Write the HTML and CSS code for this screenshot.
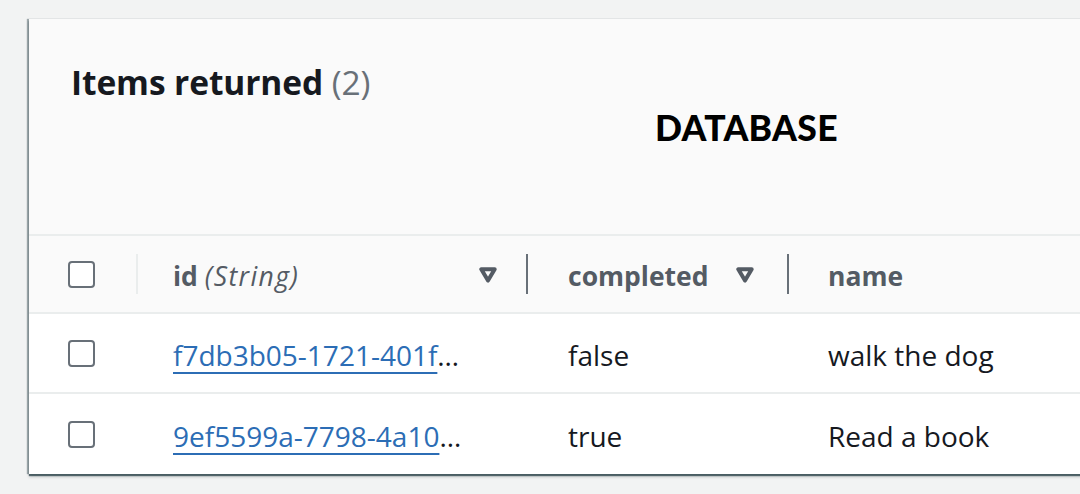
FILE: index.html
```html
<!DOCTYPE html>
<html lang="en">
<head>
<meta charset="utf-8">
<title>Items returned</title>
<link rel="stylesheet" href="styles.css">
</head>
<body>
<div class="card">
  <div class="card-header">
    <h2 class="title">Items returned <span class="count">(2)</span></h2>
    <div class="badge">DATABASE</div>
  </div>
  <div class="table">
    <div class="row head">
      <div class="cell check sep-light"><span class="box"></span></div>
      <div class="cell col-id sep-dark"><span class="label">id <em>(String)</em></span>
        <svg class="sort" width="18" height="16" viewBox="0 0 18 16"><path d="M2.3 2.3 H15.7 L9 13.6 Z" fill="none" stroke="#545b64" stroke-width="4" stroke-linejoin="round"/></svg>
      </div>
      <div class="cell col-completed sep-dark"><span class="label">completed</span>
        <svg class="sort" width="18" height="16" viewBox="0 0 18 16"><path d="M2.3 2.3 H15.7 L9 13.6 Z" fill="none" stroke="#545b64" stroke-width="4" stroke-linejoin="round"/></svg>
      </div>
      <div class="cell col-name"><span class="label">name</span></div>
    </div>
    <div class="row">
      <div class="cell check"><span class="box"></span></div>
      <div class="cell col-id"><div class="trunc"><a href="#">f7db3b05-1721-401f-9c2e-8a3d5b6e7f10</a></div></div>
      <div class="cell col-completed">false</div>
      <div class="cell col-name">walk the dog</div>
    </div>
    <div class="row">
      <div class="cell check"><span class="box"></span></div>
      <div class="cell col-id"><div class="trunc"><a href="#">9ef5599a-7798-4a10-b3c4-2d1e6f8a9b07</a></div></div>
      <div class="cell col-completed">true</div>
      <div class="cell col-name">Read a book</div>
    </div>
  </div>
</div>
</body>
</html>
```
FILE: styles.css
```css
html, body {
  margin: 0;
  padding: 0;
  background: #f2f3f3;
  overflow: hidden;
  width: 1080px;
  height: 494px;
  font-family: "Open Sans", "Noto Sans", Arial, sans-serif;
  color: #16191f;
}

.card {
  margin: 19px 0 0 29px;
  width: 1120px;
  background: #ffffff;
  box-shadow: -2px 0 1px rgba(0, 28, 36, 0.35), 0 2px 1px rgba(0, 28, 36, 0.6), 0 3px 3px rgba(0, 28, 36, 0.2);
}

.card-header {
  height: 217px;
  background: #fafafa;
  border-bottom: 2px solid #eaeded;
  box-sizing: border-box;
  padding: 0 0 0 42px;
}

.title {
  margin: 0;
  padding-top: 40px;
  font-size: 33.5px;
  line-height: 46px;
  font-weight: 700;
  color: #16191f;
  letter-spacing: -0.1px;
}

.count {
  font-weight: 400;
  color: #687078;
}

.badge {
  margin: 3px 0 0 584px;
  font-family: "Lato", "Liberation Sans", sans-serif;
  font-weight: 900;
  font-size: 35.5px;
  line-height: 40px;
  color: #000;
  letter-spacing: 0.3px;
}

.table {
  display: flex;
  flex-direction: column;
}

.row {
  display: grid;
  grid-template-columns: 108px 390px 261px 1fr;
  height: 78px;
  border-bottom: 2px solid #eaeded;
  background: #ffffff;
}

.row:last-child {
  border-bottom: none;
  height: 80px;
}

.row.head {
  background: #fafafa;
  height: 76px;
}

.cell {
  display: flex;
  align-items: center;
  font-size: 28px;
  position: relative;
  min-width: 0;
  box-sizing: border-box;
  white-space: nowrap;
  padding-top: 3px;
}

.check {
  padding-left: 39px;
  padding-top: 0;
}

.col-id {
  padding-left: 36px;
  padding-right: 62px;
}

.col-completed {
  padding-left: 41px;
  padding-right: 34px;
}

.col-name {
  padding-left: 40px;
}

.head .cell {
  font-size: 26.5px;
  font-weight: 700;
  color: #545b64;
  justify-content: space-between;
}

.head .col-name,
.head .check {
  justify-content: flex-start;
}

.head .col-id {
  padding-right: 30px;
}

.sort {
  margin-bottom: 2px;
}

.label em {
  font-weight: 400;
  font-style: italic;
  letter-spacing: 1.4px;
}

.sep-light::after,
.sep-dark::after {
  content: "";
  position: absolute;
  right: -1px;
  top: 18px;
  bottom: 18px;
  width: 2px;
}

.sep-light::after {
  background: #eaeded;
}

.sep-dark::after {
  background: #687078;
}

.box {
  display: block;
  width: 27px;
  height: 27px;
  box-sizing: border-box;
  border: 2px solid #687078;
  border-radius: 4px;
  background: #ffffff;
}

.trunc {
  overflow: hidden;
  white-space: nowrap;
  text-overflow: ellipsis;
  width: 100%;
  color: #16191f;
}

.trunc a {
  color: #2c6db5;
  text-decoration: underline;
  text-decoration-thickness: 2px;
  text-underline-offset: 6px;
}
```
